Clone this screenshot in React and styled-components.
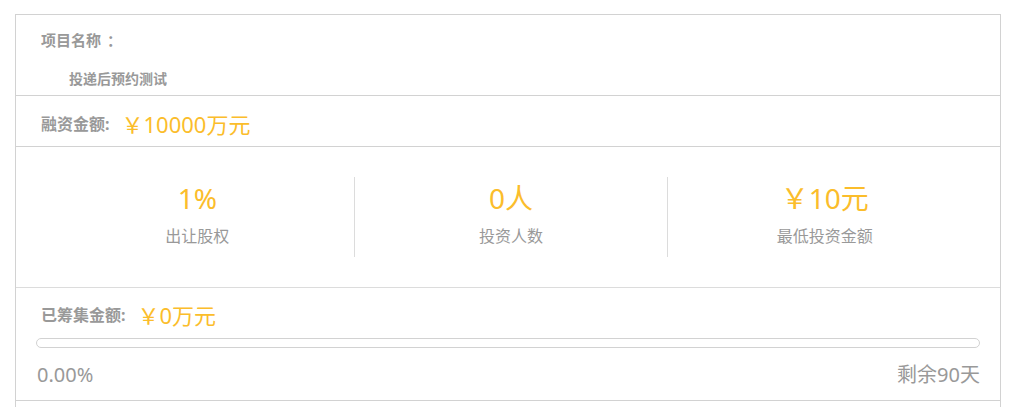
import React from "react";
import styled, { createGlobalStyle } from "styled-components";

const GlobalStyle = createGlobalStyle`
  body {
    margin: 0;
    background: #fff;
    font-family: "Noto Sans", "Noto Sans CJK SC", sans-serif;
  }
`;

const COLORS = {
  gray: "#999",
  border: "#d2d2d2",
  line: "#dcdcdc",
  gold: "#fbbd2b",
};

const stats = [
  { value: "1%", label: "出让股权" },
  { value: "0人", label: "投资人数" },
  { value: "￥10元", label: "最低投资金额" },
];

const App = () => {
  return (
    <Page>
      <GlobalStyle />
      <Card>
        {/* project name */}
        <NameSection>
          <Title size={15}>
            项目名称<Colon>：</Colon>
          </Title>
          <SubTitle>投递后预约测试</SubTitle>
        </NameSection>
        {/* amount */}
        <AmountSection>
          <Title size={16}>融资金额:</Title>
          <Money>￥10000万元</Money>
        </AmountSection>
        {/* stats */}
        <StatsSection>
          {stats.map((ele, ind) => (
            <StatCol key={ele.label} $first={ind === 0}>
              <StatValue>{ele.value}</StatValue>
              <StatLabel>{ele.label}</StatLabel>
            </StatCol>
          ))}
        </StatsSection>
        {/* progress */}
        <RaisedSection>
          <RaisedHead>
            <Title size={16}>已筹集金额:</Title>
            <Money>￥0万元</Money>
          </RaisedHead>
          <ProgressTrack>
            <ProgressFill style={{ width: "0%" }} />
          </ProgressTrack>
          <ProgressFoot>
            <span>0.00%</span>
            <span>剩余90天</span>
          </ProgressFoot>
        </RaisedSection>
      </Card>
    </Page>
  );
};

const Page = styled.div`
  padding: 14px 9px 0 15px;
  height: 393px;
  overflow: hidden;
`;

const Card = styled.div`
  width: 984px;
  border: 1px solid ${COLORS.border};
  border-bottom: none;
  height: 400px;
`;

const Title = styled.span`
  font-size: ${(p) => p.size}px;
  font-weight: bold;
  color: ${COLORS.gray};
`;

const Colon = styled.span`
  padding-left: 6px;
`;

const NameSection = styled.div`
  height: 81px;
  box-sizing: border-box;
  padding: 15px 0 0 25px;
  border-bottom: 1px solid ${COLORS.border};
  display: flex;
  flex-direction: column;
  line-height: 20px;
`;

const SubTitle = styled.div`
  margin-top: 19px;
  padding-left: 28px;
  font-size: 14px;
  font-weight: bold;
  color: ${COLORS.gray};
`;

const AmountSection = styled.div`
  height: 51px;
  box-sizing: border-box;
  padding: 4px 0 0 25px;
  border-bottom: 1px solid ${COLORS.border};
  display: flex;
  align-items: center;
`;

const Money = styled.span`
  margin-left: 12px;
  font-size: 22px;
  color: ${COLORS.gold};
`;

const StatsSection = styled.div`
  height: 141px;
  box-sizing: border-box;
  padding: 30px 19px 0 25px;
  border-bottom: 1px solid ${COLORS.line};
  display: flex;
  align-items: flex-start;
`;

const StatCol = styled.div`
  flex: 1;
  height: 80px;
  border-left: ${(p) => (p.$first ? "none" : `1px solid ${COLORS.line}`)};
  display: flex;
  flex-direction: column;
  align-items: center;
`;

const StatValue = styled.div`
  margin-top: 2px;
  font-size: 28px;
  line-height: 38px;
  color: ${COLORS.gold};
`;

const StatLabel = styled.div`
  margin-top: 9px;
  font-size: 16px;
  line-height: 20px;
  color: ${COLORS.gray};
`;

const RaisedSection = styled.div`
  height: 113px;
  box-sizing: border-box;
  padding: 12px 20px 0 20px;
  border-bottom: 1px solid ${COLORS.border};
`;

const RaisedHead = styled.div`
  display: flex;
  align-items: center;
  padding-left: 5px;
  height: 28px;
`;

const ProgressTrack = styled.div`
  margin-top: 10px;
  height: 10px;
  box-sizing: border-box;
  border: 1px solid ${COLORS.border};
  border-radius: 5px;
  overflow: hidden;
`;

const ProgressFill = styled.div`
  height: 100%;
  background: ${COLORS.gold};
`;

const ProgressFoot = styled.div`
  margin-top: 14px;
  display: flex;
  justify-content: space-between;
  font-size: 20px;
  line-height: 26px;
  color: ${COLORS.gray};
  padding-left: 1px;
`;

export default App;
